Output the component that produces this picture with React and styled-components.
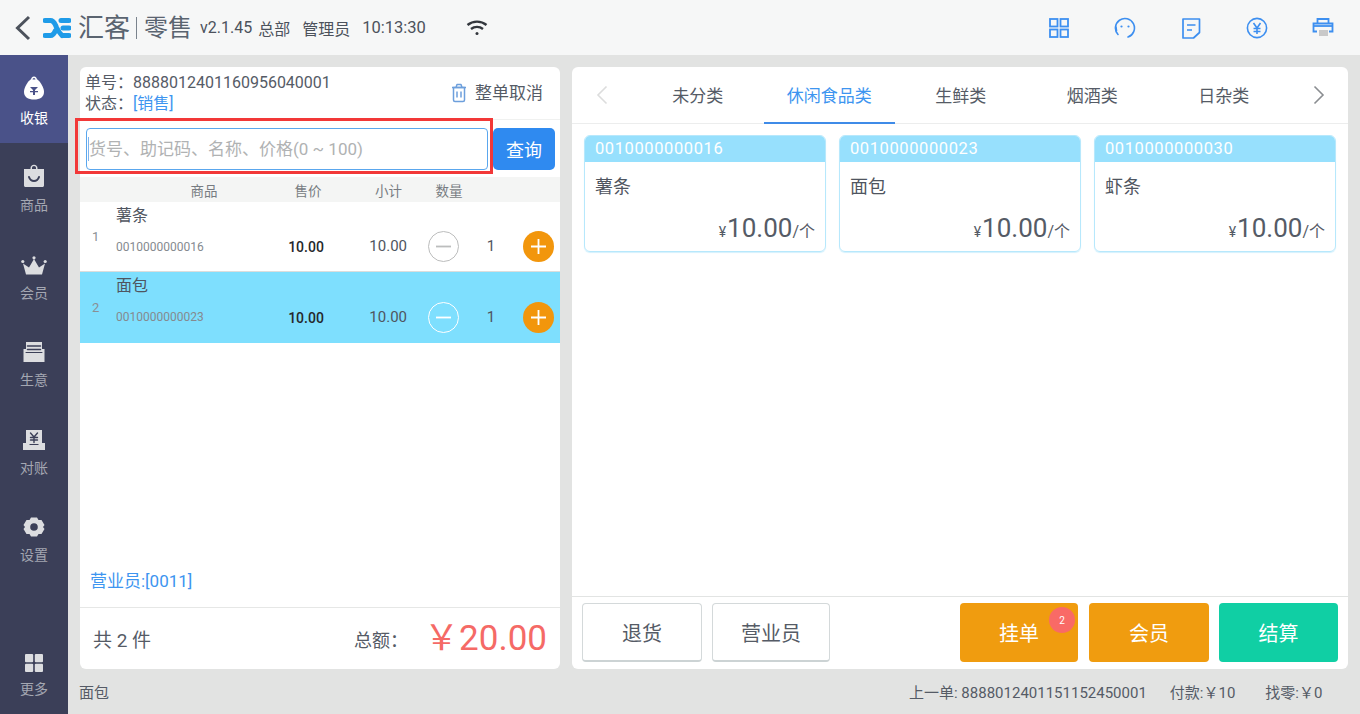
import React from 'react';
import styled, { createGlobalStyle } from 'styled-components';

const GlobalStyle = createGlobalStyle`
  html, body {
    margin: 0;
    padding: 0;
    height: 100%;
    overflow: hidden;
  }
  body {
    font-family: Roboto, "Noto Sans CJK SC", "Noto Sans", sans-serif;
    color: #555b66;
    background: #e2e3e2;
  }
  * { box-sizing: border-box; }
`;

const Page = styled.div`
  width: 1360px;
  height: 714px;
  display: flex;
  flex-direction: column;
`;

const Header = styled.header`
  height: 55px;
  flex: none;
  display: flex;
  align-items: center;
  background: #f6f7f7;
  padding-left: 13px;
`;

const Brand = styled.span`
  font-size: ${props => props.size}px;
  color: #5a6470;
  margin-left: ${props => props.gap || 0}px;
  line-height: 1;
`;

const Divider = styled.i`
  width: 1px;
  height: 22px;
  background: #7a838d;
  margin-left: 6px;
  margin-right: 7px;
`;

const Meta = styled.span`
  font-size: ${props => props.size || 16}px;
  color: #4c525c;
  margin-left: ${props => props.gap || 0}px;
`;

const HeaderIcons = styled.div`
  margin-left: auto;
  display: flex;
  align-items: center;
  gap: 44px;
  padding-right: 26px;
`;

const Body = styled.div`
  flex: 1;
  display: flex;
  min-height: 0;
`;

const Sidebar = styled.nav`
  width: 68px;
  flex: none;
  background: #3b3f58;
  display: flex;
  flex-direction: column;
`;

const NavItem = styled.div`
  height: 87.5px;
  flex: none;
  display: flex;
  flex-direction: column;
  align-items: center;
  justify-content: flex-end;
  padding-bottom: 16px;
  gap: 8px;
  font-size: 14px;
  line-height: 18px;
  color: ${props => (props.active ? '#ffffff' : '#a4a7b2')};
  background: ${props => (props.active ? '#4a5289' : 'transparent')};
  margin-top: ${props => (props.bottom ? 'auto' : '0')};
  svg { color: ${props => (props.active ? '#ffffff' : '#dcdde0')}; }
`;

const Content = styled.div`
  flex: 1;
  display: flex;
  flex-direction: column;
  min-width: 0;
`;

const Panels = styled.div`
  height: 614px;
  flex: none;
  display: flex;
  gap: 12px;
  padding: 12px 12px 0;
`;

const Panel = styled.section`
  width: ${props => props.width}px;
  flex: none;
  background: #ffffff;
  border-radius: 6px;
  display: flex;
  flex-direction: column;
  position: relative;
`;

const OrderInfo = styled.div`
  height: 53px;
  flex: none;
  display: flex;
  align-items: center;
  justify-content: space-between;
  padding: 0 17px 0 5px;
  font-size: 16px;
  line-height: 21px;
  border-bottom: 1px solid #f0f1f0;
`;

const Link = styled.span`
  color: #3d95f0;
`;

const CancelAll = styled.div`
  display: flex;
  align-items: center;
  gap: 8px;
  font-size: 17px;
`;

const SearchRow = styled.div`
  height: 57px;
  flex: none;
  display: flex;
  align-items: center;
  gap: 5px;
  padding: 4px 5px 4px 6px;
  position: relative;
`;

const SearchInput = styled.input`
  width: 402px;
  height: 42px;
  border: 1px solid #5aa7ee;
  border-radius: 4px;
  padding: 0 2px;
  font-family: inherit;
  font-size: 17px;
  outline: none;
  background: #fff;
  &::placeholder { color: #b0b2b3; opacity: 1; }
`;

const Caret = styled.i`
  position: absolute;
  left: 8px;
  top: 17px;
  width: 1px;
  height: 24px;
  background: #7fb4ee;
`;

const Highlight = styled.div`
  position: absolute;
  left: -5px;
  top: -2px;
  width: 418px;
  height: 56px;
  border: 3px solid #f23838;
  pointer-events: none;
`;

const SearchButton = styled.button`
  width: 62px;
  height: 42px;
  border: 0;
  border-radius: 5px;
  background: #2f8af0;
  color: #fff;
  font-family: inherit;
  font-size: 18px;
`;

const TableHead = styled.div`
  height: 25px;
  flex: none;
  position: relative;
  display: grid;
  grid-template-columns: 36px 152px 76px 63px 72px 24px 57px;
  align-items: center;
  background: #f4f5f4;
  font-size: 13.5px;
  color: #777c82;
`;

const HeadCell = styled.span`
  grid-column: ${props => props.col};
  text-align: center;
  transform: translateX(${props => props.shift || 0}px);
`;

const Row = styled.div`
  height: ${props => (props.active ? 71 : 70)}px;
  flex: none;
  display: grid;
  grid-template-columns: 36px 152px 76px 63px 72px 24px 57px;
  align-items: end;
  padding-bottom: 9px;
  background: ${props => (props.active ? '#7edffe' : '#ffffff')};
  border-bottom: 1px solid ${props => (props.active ? '#7edffe' : '#dcdddc')};
`;

const RowIndex = styled.span`
  align-self: center;
  margin-top: 9px;
  padding-left: 12px;
  font-size: 13px;
  color: #8a8f94;
`;

const RowName = styled.div`
  align-self: start;
`;

const ItemTitle = styled.div`
  font-size: 16px;
  line-height: 28px;
  color: #4f5560;
`;

const ItemCode = styled.div`
  margin-top: 9px;
  font-size: 12px;
  line-height: 16px;
  color: #858a8f;
`;

const PriceCell = styled.span`
  height: 31px;
  line-height: 33px;
  text-align: center;
  font-size: 14px;
  font-weight: 500;
  color: #25282c;
`;

const SubtotalCell = styled.span`
  height: 31px;
  line-height: 31px;
  text-align: right;
  font-size: 15px;
  color: #4f5560;
`;

const QtyCell = styled.span`
  height: 31px;
  line-height: 31px;
  text-align: center;
  font-size: 15px;
  color: #4f5560;
`;

const RoundButton = styled.span`
  width: 31px;
  height: 31px;
  border-radius: 50%;
  display: flex;
  align-items: center;
  justify-content: center;
  background: ${props => (props.plus ? '#f2960c' : 'transparent')};
  border: ${props => (props.plus ? '0' : `1px solid ${props.light ? '#ffffff' : '#bcbdbd'}`)};
  color: ${props => (props.plus || props.light ? '#ffffff' : '#bcbdbd')};
  justify-self: ${props => (props.plus ? 'end' : 'center')};
  margin-right: ${props => (props.plus ? '6px' : '0')};
`;

const Staff = styled.div`
  margin-top: auto;
  height: 44px;
  flex: none;
  padding: 0 10px 0;
  font-size: 17px;
  line-height: 36px;
  color: #3d95f0;
`;

const Totals = styled.div`
  height: 62px;
  flex: none;
  display: flex;
  align-items: center;
  padding: 0 13px;
  border-top: 1px solid #e6e7e6;
  font-size: 19px;
`;

const TotalLabel = styled.span`
  margin-left: auto;
  font-size: 18px;
`;

const TotalValue = styled.span`
  margin-left: 16px;
  font-size: 35px;
  line-height: 1;
  color: #f56a66;
`;

const Tabs = styled.div`
  height: 57px;
  flex: none;
  display: flex;
  border-bottom: 1px solid #eceded;
`;

const TabArrow = styled.div`
  flex: none;
  width: ${props => props.width}px;
  display: flex;
  align-items: center;
  justify-content: center;
  padding-right: ${props => props.pad || 0}px;
  color: ${props => props.color};
`;

const Tab = styled.div`
  width: 131.5px;
  flex: none;
  height: 57px;
  display: flex;
  align-items: center;
  justify-content: center;
  font-size: 17px;
  color: ${props => (props.active ? '#3d95f0' : '#555b66')};
  border-bottom: 2px solid ${props => (props.active ? '#3f8be8' : 'transparent')};
`;

const CardGrid = styled.div`
  flex: 1;
  display: flex;
  align-items: flex-start;
  gap: 13px;
  padding: 11px 12px;
`;

const Card = styled.div`
  width: 242px;
  height: 117px;
  border: 1px solid #b7e8fc;
  border-radius: 6px;
  overflow: hidden;
  display: flex;
  flex-direction: column;
  box-shadow: 0 1px 1px #d4f1fd;
`;

const CardCode = styled.div`
  height: 26px;
  flex: none;
  background: #97e0fd;
  color: #ffffff;
  font-size: 16.5px;
  line-height: 26px;
  padding-left: 10px;
  letter-spacing: 0.6px;
`;

const CardName = styled.div`
  font-size: 18px;
  line-height: 24px;
  padding: 13px 10px 0;
  color: #4f5560;
`;

const CardPrice = styled.div`
  margin-top: auto;
  display: flex;
  align-items: baseline;
  justify-content: flex-end;
  padding: 0 10px 3px 0;
  color: #555b66;
  font-size: 16px;
  line-height: 32px;
`;

const Yen = styled.span`
  font-size: 14px;
  margin-right: 1px;
`;

const Amount = styled.span`
  font-size: 26px;
`;

const Actions = styled.div`
  height: 73px;
  flex: none;
  display: flex;
  align-items: flex-start;
  padding: 6px 10px 0;
  border-top: 1px solid #e2e4e3;
`;

const ActionButton = styled.div`
  position: relative;
  width: ${props => props.width}px;
  height: 59px;
  flex: none;
  display: flex;
  align-items: center;
  justify-content: center;
  border-radius: 4px;
  font-size: 20px;
  margin-left: ${props => props.gap || 0}px;
  background: ${props => props.bg || '#ffffff'};
  color: ${props => (props.bg ? '#ffffff' : '#555b66')};
  border: ${props => (props.bg ? '0' : '1px solid #d4d9da')};
  border-bottom: ${props => (props.bg ? '0' : '2px solid #ccd3d4')};
`;

const Badge = styled.span`
  position: absolute;
  left: 89px;
  top: 4px;
  width: 26px;
  height: 26px;
  border-radius: 50%;
  background: #f96a66;
  color: #fff;
  font-size: 10px;
  display: flex;
  align-items: center;
  justify-content: center;
`;

const StatusBar = styled.footer`
  flex: 1;
  display: flex;
  align-items: center;
  padding: 0 11px 0 11px;
  font-size: 15px;
  color: #555b66;
`;

const StatusItem = styled.span`
  margin-left: ${props => props.gap}px;
  white-space: nowrap;
`;

const Ico = ({ size = 24, h, children, sw }) => (
  <svg width={size} height={h || size} viewBox={`0 0 ${size} ${h || size}`} fill="none" stroke="currentColor" strokeWidth={sw || 0} strokeLinecap="round" strokeLinejoin="round">
    {children}
  </svg>
);

const BackIcon = () => (
  <svg width="20" height="28" viewBox="0 0 20 28" fill="none" stroke="#4c525c" strokeWidth="3">
    <path d="M16 3 4.500 14 16 25" />
  </svg>
);

const LogoMark = () => (
  <svg width="28" height="22" viewBox="0 0 28 22" fill="none" style={{ marginLeft: 10 }}>
    <path d="M2 3.500h5.500c2.500 0 3.500 1.500 5 4.500l1 2.500c1.500 3 2.500 5 5.500 8" stroke="#1e9be8" strokeWidth="5" strokeLinecap="round" />
    <path d="M2 18.500h5.500c2.500 0 4-2.500 5-5" stroke="#1e9be8" strokeWidth="5" strokeLinecap="round" />
    <path d="M18 3.500h8M20 11h6M20 18.500h6" stroke="#1e9be8" strokeWidth="5" strokeLinecap="round" />
  </svg>
);

const WifiIcon = () => (
  <svg width="22" height="18" viewBox="0 0 22 18" fill="none" stroke="#33373d" strokeWidth="2.400" style={{ marginLeft: 40 }}>
    <path d="M1.500 6c5.500-4.500 13.500-4.500 19 0" />
    <path d="M5 10c3.500-2.800 8.500-2.800 12 0" />
    <circle cx="11" cy="14.500" r="1.500" fill="#33373d" stroke="none" />
  </svg>
);

const GridIcon = () => (
  <svg width="22" height="22" viewBox="0 0 22 22" fill="none" stroke="#3d8ff0" strokeWidth="1.800">
    <rect x="2" y="2" width="7.500" height="7.500" />
    <rect x="12.500" y="2" width="7.500" height="7.500" />
    <rect x="2" y="12.500" width="7.500" height="7.500" />
    <rect x="12.500" y="12.500" width="7.500" height="7.500" />
  </svg>
);

const FaceIcon = () => (
  <svg width="22" height="22" viewBox="0 0 22 22" fill="none" stroke="#3d8ff0" strokeWidth="1.600">
    <path d="M4 17.500A9.500 9.500 0 1 1 14 20" strokeLinecap="round" />
    <path d="M2.500 13.500 2 10" strokeLinecap="round" />
    <circle cx="7.500" cy="9.500" r="1.100" fill="#3d8ff0" stroke="none" />
    <circle cx="14.500" cy="9.500" r="1.100" fill="#3d8ff0" stroke="none" />
  </svg>
);

const NoteIcon = () => (
  <svg width="22" height="24" viewBox="0 0 22 24" fill="none" stroke="#3d8ff0" strokeWidth="1.700" strokeLinejoin="round">
    <path d="M3 3h16.500v13.500L13.500 22H3z" />
    <path d="M7 9h8.500M7 14h5" />
  </svg>
);

const YenCircle = () => (
  <svg width="22" height="22" viewBox="0 0 22 22" fill="none" stroke="#3d8ff0" strokeWidth="1.600">
    <circle cx="11" cy="11" r="9.600" />
    <path d="m7.500 6 3.500 5 3.500-5M7.500 11.500h7M7.500 14.500h7M11 11v6" />
  </svg>
);

const PrinterIcon = () => (
  <svg width="22" height="22" viewBox="0 0 22 22" fill="none" strokeWidth="1.800">
    <path d="M5.500 6V2h11v4" stroke="#3d8ff0" />
    <path d="M5 14.500H1.500V6.500h19v8H17" stroke="#3d8ff0" fill="none" />
    <path d="M2 9h18" stroke="#3d8ff0" />
    <rect x="7" y="13" width="9" height="6" fill="#c9c9c9" />
  </svg>
);

const TrashIcon = () => (
  <svg width="16" height="20" viewBox="0 0 16 20" fill="none" stroke="#6d9fdc" strokeWidth="1.500" strokeLinejoin="round">
    <path d="M1 4.500h14M5 4.500l1-3h4l1 3" />
    <path d="M2.500 4.500v12.500c0 .8.700 1.500 1.500 1.500h8c.8 0 1.500-.7 1.500-1.500V4.500z" />
    <path d="M6 8.500v6M10 8.500v6" />
  </svg>
);

const BagIcon = () => (
  <Ico size={24} h={26}>
    <path fill="currentColor" d="M9 5c0-2 1.300-3.500 3-3.500S15 3 15 5h-1.500c0-1.200-.6-2-1.500-2s-1.500.8-1.500 2z" />
    <path fill="currentColor" d="M8.500 4.500h7C18 6.500 22 12 22 17c0 5-4 7.500-10 7.500S2 22 2 17C2 12 6 6.500 8.500 4.500z" />
    <path fill="#4a5289" d="M8 12h8l-3 3v1h3v1.300h-3V20h-2v-2.700H8V16h3v-1z" />
  </Ico>
);

const ShopBagIcon = () => (
  <Ico size={22} h={24}>
    <path fill="currentColor" d="M7.500 5V4c0-2 1.500-3.300 3.500-3.300S14.500 2 14.500 4v1H21v16.500c0 .8-.7 1.500-1.500 1.500h-17c-.8 0-1.500-.7-1.500-1.500V5zM9 5h4V4c0-1.200-.8-2-2-2s-2 .8-2 2z" />
    <path d="M6 13c1 3 3 4 5 4s4-1 5-4" stroke="#3b3f58" strokeWidth="2" />
  </Ico>
);

const CrownIcon = () => (
  <Ico size={26} h={20}>
    <path fill="currentColor" d="M5 18.500 2 7.500l6 4L13 3l5 8.500 6-4-3 11z" />
    <circle cx="1.800" cy="5.500" r="1.600" fill="currentColor" />
    <circle cx="13" cy="1.800" r="1.600" fill="currentColor" />
    <circle cx="24.200" cy="5.500" r="1.600" fill="currentColor" />
  </Ico>
);

const TrayIcon = () => (
  <Ico size={22} h={22}>
    <path fill="currentColor" d="M3 1h16v7h2.500v13H.5V8H3z" />
    <path d="M4.500 5h13M4.500 8.500h13" stroke="#3b3f58" strokeWidth="1.500" />
    <path d="M3 11.500h16" stroke="#3b3f58" strokeWidth="1" />
  </Ico>
);

const LedgerIcon = () => (
  <Ico size={24} h={22}>
    <path fill="currentColor" d="M4 1h16v14H4z" />
    <path fill="currentColor" d="M1 14h5l2 2h8l2-2h5v7H1z" />
    <path d="m8.500 4 3.500 4 3.500-4M8.500 8.500h7M8.500 11h7M12 8v5.500" stroke="#3b3f58" strokeWidth="1.400" />
  </Ico>
);

const GearIcon = () => (
  <svg width="22" height="22" viewBox="0 0 22 22">
    <path fill="currentColor" fillRule="evenodd" d="M8 1.500h6l1.500 2.600 3-.1 3 5-1.500 2 1.500 2-3 5-3-.1L14 20.500H8l-1.500-2.600-3 .1-3-5L2 11 .5 9l3-5 3 .1zM11 7.200a3.800 3.800 0 1 0 0 7.600 3.800 3.800 0 0 0 0-7.600z" />
  </svg>
);

const TilesIcon = () => (
  <svg width="18" height="18" viewBox="0 0 18 18" fill="currentColor">
    <rect x="0" y="0" width="8.200" height="8.200" rx="1" />
    <rect x="9.800" y="0" width="8.200" height="8.200" rx="1" />
    <rect x="0" y="9.800" width="8.200" height="8.200" rx="1" />
    <rect x="9.800" y="9.800" width="8.200" height="8.200" rx="1" />
  </svg>
);

const Chevron = ({ left }) => (
  <svg width="12" height="20" viewBox="0 0 12 20" fill="none" stroke="currentColor" strokeWidth="1.600">
    <path d={left ? 'M10.500 1.500 2 10l8.500 8.500' : 'M1.500 1.500 10 10l-8.500 8.500'} />
  </svg>
);

const MinusGlyph = () => (
  <svg width="15" height="15" viewBox="0 0 15 15" stroke="currentColor" strokeWidth="1.800">
    <path d="M0 7.500h15" />
  </svg>
);

const PlusGlyph = () => (
  <svg width="15" height="15" viewBox="0 0 15 15" stroke="currentColor" strokeWidth="1.800">
    <path d="M0 7.500h15M7.500 0v15" />
  </svg>
);

const navItems = [
  { label: '收银', icon: <BagIcon />, active: true },
  { label: '商品', icon: <ShopBagIcon /> },
  { label: '会员', icon: <CrownIcon /> },
  { label: '生意', icon: <TrayIcon /> },
  { label: '对账', icon: <LedgerIcon /> },
  { label: '设置', icon: <GearIcon /> },
];

const orderRows = [
  { no: 1, name: '薯条', code: '0010000000016' },
  { no: 2, name: '面包', code: '0010000000023', active: true },
];

const products = [
  { name: '薯条', code: '0010000000016' },
  { name: '面包', code: '0010000000023' },
  { name: '虾条', code: '0010000000030' },
];

const categories = ['未分类', '休闲食品类', '生鲜类', '烟酒类', '日杂类'];

export default function App() {
  return (
    <Page>
      <GlobalStyle />
      <Header>
        <BackIcon />
        <LogoMark />
        <Brand size={26} gap={7}>汇客</Brand>
        <Divider />
        <Brand size={24}>零售</Brand>
        <Meta gap={8}>v2.1.45</Meta>
        <Meta gap={6}>总部</Meta>
        <Meta gap={12}>管理员</Meta>
        <Meta gap={12} size={16.500}>10:13:30</Meta>
        <WifiIcon />
        <HeaderIcons>
          <GridIcon />
          <FaceIcon />
          <NoteIcon />
          <YenCircle />
          <PrinterIcon />
        </HeaderIcons>
      </Header>
      <Body>
        <Sidebar>
          {navItems.map((item) => (
            <NavItem key={item.label} active={item.active}>
              {item.icon}
              <span>{item.label}</span>
            </NavItem>
          ))}
          <NavItem bottom>
            <TilesIcon />
            <span>更多</span>
          </NavItem>
        </Sidebar>
        <Content>
          <Panels>
            <Panel width={480}>
              <OrderInfo>
                <div>
                  <div>单号：8888012401160956040001</div>
                  <div>状态：<Link>[销售]</Link></div>
                </div>
                <CancelAll>
                  <TrashIcon />
                  整单取消
                </CancelAll>
              </OrderInfo>
              <SearchRow>
                <SearchInput placeholder="货号、助记码、名称、价格(0 ~ 100)" readOnly />
                <Caret />
                <SearchButton>查询</SearchButton>
                <Highlight />
              </SearchRow>
              <TableHead>
                <HeadCell col={2} shift={12}>商品</HeadCell>
                <HeadCell col={3} shift={2}>售价</HeadCell>
                <HeadCell col={4} shift={13}>小计</HeadCell>
                <HeadCell col="5 / 7" shift={-6}>数量</HeadCell>
              </TableHead>
              {orderRows.map((row) => (
                <Row key={row.no} active={row.active}>
                  <RowIndex>{row.no}</RowIndex>
                  <RowName>
                    <ItemTitle>{row.name}</ItemTitle>
                    <ItemCode>{row.code}</ItemCode>
                  </RowName>
                  <PriceCell>10.00</PriceCell>
                  <SubtotalCell>10.00</SubtotalCell>
                  <RoundButton light={row.active}><MinusGlyph /></RoundButton>
                  <QtyCell>1</QtyCell>
                  <RoundButton plus><PlusGlyph /></RoundButton>
                </Row>
              ))}
              <Staff>营业员:[0011]</Staff>
              <Totals>
                <span>共 2 件</span>
                <TotalLabel>总额：</TotalLabel>
                <TotalValue>￥20.00</TotalValue>
              </Totals>
            </Panel>
            <Panel width={776}>
              <Tabs>
                <TabArrow width={60} color="#dcdddd"><Chevron left /></TabArrow>
                {categories.map((name) => (
                  <Tab key={name} active={name === '休闲食品类'}>{name}</Tab>
                ))}
                <TabArrow width={58} color="#8a8d91"><Chevron /></TabArrow>
              </Tabs>
              <CardGrid>
                {products.map((item) => (
                  <Card key={item.code}>
                    <CardCode>{item.code}</CardCode>
                    <CardName>{item.name}</CardName>
                    <CardPrice>
                      <Yen>¥</Yen>
                      <Amount>10.00</Amount>
                      /个
                    </CardPrice>
                  </Card>
                ))}
              </CardGrid>
              <Actions>
                <ActionButton width={120}>退货</ActionButton>
                <ActionButton width={118} gap={10}>营业员</ActionButton>
                <ActionButton width={118} gap={130} bg="#f09c0f">
                  挂单
                  <Badge>2</Badge>
                </ActionButton>
                <ActionButton width={120} gap={11} bg="#f09c0f">会员</ActionButton>
                <ActionButton width={119} gap={10} bg="#10cfa4">结算</ActionButton>
              </Actions>
            </Panel>
          </Panels>
          <StatusBar>
            <span>面包</span>
            <StatusItem gap={800}>上一单: 8888012401151152450001</StatusItem>
            <StatusItem gap={23}>付款:￥10</StatusItem>
            <StatusItem gap={30}>找零:￥0</StatusItem>
          </StatusBar>
        </Content>
      </Body>
    </Page>
  );
}
